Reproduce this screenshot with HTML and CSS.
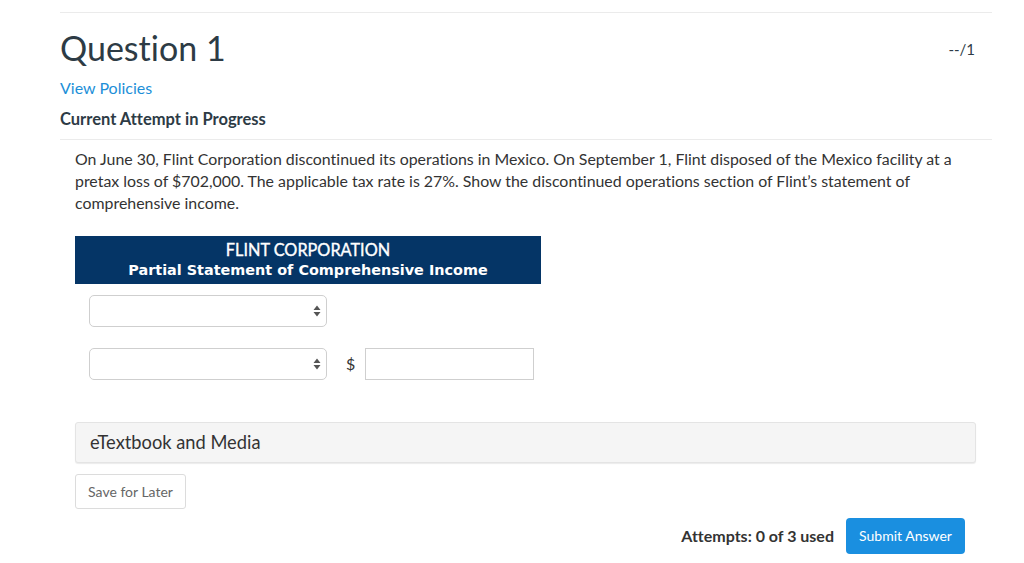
FILE: index.html
```html
<!DOCTYPE html>
<html lang="en">
<head>
<meta charset="utf-8">
<title>Question 1</title>
<link rel="stylesheet" href="styles.css">
</head>
<body>
<div class="page">
  <div class="qhead">
    <h1 class="title">Question 1</h1>
    <div class="score">--/1</div>
  </div>
  <a class="policies" href="#">View Policies</a>
  <div class="status">Current Attempt in Progress</div>
  <div class="body">
    <p class="prompt">On June 30, Flint Corporation discontinued its operations in Mexico. On September 1, Flint disposed of the Mexico facility at a pretax loss of $702,000. The applicable tax rate is 27%. Show the discontinued operations section of Flint’s statement of comprehensive income.</p>
    <div class="sheet-head">
      <div class="co">FLINT CORPORATION</div>
      <div class="stmt">Partial Statement of Comprehensive Income</div>
    </div>
    <div class="rows">
      <div class="row">
        <div class="select"><svg width="8" height="12" viewBox="0 0 8 12"><path d="M4 0.5 L7.5 5 H0.5 Z M4 11.5 L7.5 7 H0.5 Z" fill="#555"/></svg></div>
      </div>
      <div class="row row2">
        <div class="select"><svg width="8" height="12" viewBox="0 0 8 12"><path d="M4 0.5 L7.5 5 H0.5 Z M4 11.5 L7.5 7 H0.5 Z" fill="#555"/></svg></div>
        <span class="dollar">$</span>
        <div class="input"></div>
      </div>
    </div>
    <div class="media">eTextbook and Media</div>
    <button class="save">Save for Later</button>
    <div class="footer">
      <span class="attempts">Attempts: 0 of 3 used</span>
      <button class="submit">Submit Answer</button>
    </div>
  </div>
</div>
</body>
</html>
```
FILE: styles.css
```css
* { box-sizing: border-box; }
body {
  margin: 0;
  font-family: Lato, "Open Sans", sans-serif;
  font-variant-ligatures: none;
  color: #2d3b45;
  background: #fff;
}
.page {
  margin: 12px 32px 0 60px;
  border-top: 1px solid #ebebeb;
}
.qhead {
  display: flex;
  justify-content: space-between;
  align-items: flex-start;
}
.title {
  margin: 15px 0 0;
  font-size: 34px;
  font-weight: 400;
  line-height: 1.2;
  color: #2d3b45;
}
.score {
  margin-top: 27px;
  padding-right: 17px;
  font-size: 15px;
  line-height: 18px;
  color: #2d3b45;
}
.policies {
  display: block;
  margin-top: 9px;
  font-size: 16px;
  line-height: 19px;
  color: #1d8fd8;
  text-decoration: none;
}
.status {
  margin-top: 13px;
  padding-bottom: 11px;
  font-size: 16.5px;
  font-weight: 700;
  line-height: 18px;
  color: #2d3b45;
  border-bottom: 1px solid #ebebeb;
}
.body {
  padding-left: 15px;
  padding-right: 16px;
}
.prompt {
  margin: 8px 0 0;
  font-size: 15.9px;
  line-height: 22px;
  color: #333;
  max-width: 895px;
}
.sheet-head {
  margin-top: 22px;
  width: 466px;
  padding: 3px 0;
  background: #053566;
  color: #fff;
  text-align: center;
}
.co {
  font-size: 16.3px;
  line-height: 21px;
  -webkit-text-stroke: 0.35px #fff;
}
.stmt {
  font-family: "DejaVu Sans", Verdana, sans-serif;
  font-weight: 700;
  font-size: 14.4px;
  line-height: 21px;
}
.rows {
  padding-left: 14px;
}
.row {
  display: flex;
  align-items: center;
  margin-top: 11px;
}
.row2 { margin-top: 21px; }
.select {
  width: 238px;
  height: 32px;
  border: 1px solid #cfcfcf;
  border-radius: 5px;
  background: #fff;
  display: flex;
  align-items: center;
  justify-content: flex-end;
  padding-right: 5px;
}
.dollar {
  margin-left: 19px;
  font-size: 16px;
  color: #333;
}
.input {
  margin-left: 10px;
  width: 169px;
  height: 32px;
  border: 1px solid #cfcfcf;
  background: #fff;
}
.media {
  margin-top: 42px;
  height: 41px;
  background: #f5f5f5;
  border: 1px solid #e4e4e4;
  border-radius: 3px;
  box-shadow: 0 1px 1px rgba(0,0,0,0.08);
  padding-left: 14px;
  font-size: 18.3px;
  line-height: 39px;
  color: #333;
}
.save {
  display: block;
  margin-top: 11px;
  width: 111px;
  height: 35px;
  background: #fff;
  border: 1px solid #dcdcdc;
  border-radius: 3px;
  font-family: Lato, sans-serif;
  font-size: 14px;
  color: #666;
  padding: 0;
}
.footer {
  display: flex;
  justify-content: flex-end;
  align-items: center;
  gap: 12px;
  margin-top: 9px;
  padding-right: 11px;
}
.attempts {
  font-size: 16px;
  font-weight: 700;
  color: #333;
}
.submit {
  width: 119px;
  height: 36px;
  background: #1a8fe0;
  border: none;
  border-radius: 4px;
  color: #fff;
  font-family: Lato, sans-serif;
  font-size: 14px;
  padding: 0;
}
```
